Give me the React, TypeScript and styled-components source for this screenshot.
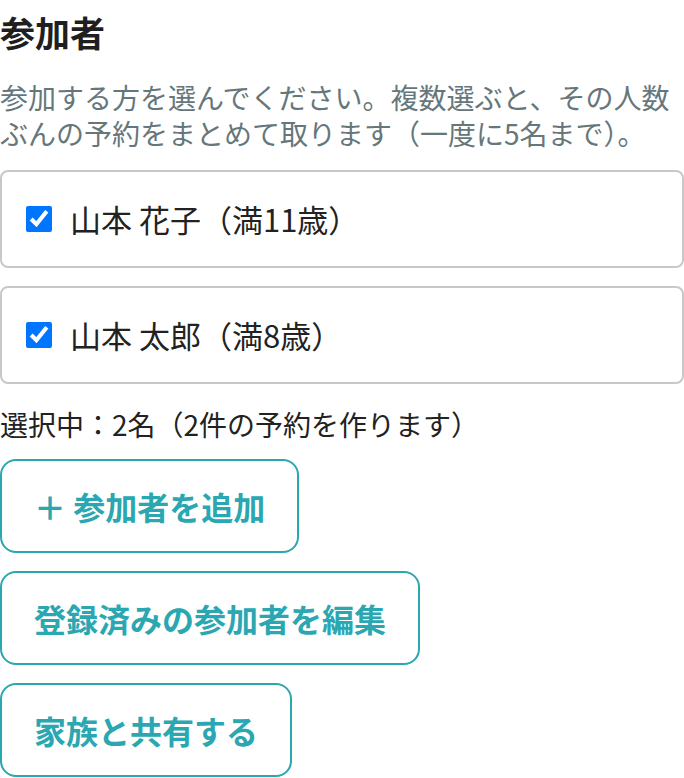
import React from "react";
import styled, { createGlobalStyle } from "styled-components";

const GlobalStyle = createGlobalStyle`
  html, body {
    margin: 0;
    padding: 0;
    background: #ffffff;
  }
  body {
    font-family: "Noto Sans CJK JP", "Noto Sans", sans-serif;
    color: #222222;
  }
`;

const Page = styled.div`
  display: flex;
  flex-direction: column;
  align-items: stretch;
  padding-top: 10px;
  width: 684px;
  box-sizing: border-box;
`;

const Title = styled.h2`
  margin: 0;
  font-size: 35px;
  line-height: 44px;
  font-weight: 700;
  color: #1f1f1f;
`;

const Description = styled.p`
  margin: 25px 0 0;
  font-size: 28px;
  line-height: 36px;
  color: #66777b;
`;

const CardList = styled.div`
  display: flex;
  flex-direction: column;
  gap: 18px;
  margin-top: 19px;
`;

const Card = styled.label`
  display: flex;
  align-items: center;
  gap: 18px;
  height: 98px;
  box-sizing: border-box;
  padding: 0 24px;
  border: 2px solid #c8c8c8;
  border-radius: 8px;
  background: #ffffff;
  cursor: pointer;
`;

const Check = styled.input`
  width: 26px;
  height: 26px;
  margin: 0;
  accent-color: #0075ff;
  flex: none;
`;

const CardText = styled.span`
  font-size: 31px;
  line-height: 40px;
  color: #222222;
`;

const Summary = styled.div`
  margin-top: 22px;
  font-size: 28px;
  line-height: 36px;
  color: #222222;
`;

const ButtonList = styled.div`
  display: flex;
  flex-direction: column;
  align-items: flex-start;
  gap: 18px;
  margin-top: 17px;
`;

const OutlineButton = styled.button`
  display: inline-flex;
  align-items: center;
  height: 94px;
  box-sizing: border-box;
  padding: 0 32px;
  border: 2px solid #2ba7b1;
  border-radius: 16px;
  background: #ffffff;
  color: #2ba7b1;
  font-family: "Noto Sans CJK JP", "Noto Sans", sans-serif;
  font-size: 32px;
  font-weight: 700;
  line-height: 40px;
  cursor: pointer;
`;

const participants = [
  { id: 1, label: "山本 花子（満11歳）" },
  { id: 2, label: "山本 太郎（満8歳）" },
];

export default function App() {
  return (
    <>
      <GlobalStyle />
      <Page>
        <Title>参加者</Title>
        <Description>
          参加する方を選んでください。複数選ぶと、その人数ぶんの予約をまとめて取ります（一度に5名まで）。
        </Description>
        <CardList>
          {participants.map((p) => (
            <Card key={p.id}>
              <Check type="checkbox" defaultChecked />
              <CardText>{p.label}</CardText>
            </Card>
          ))}
        </CardList>
        <Summary>選択中：2名（2件の予約を作ります）</Summary>
        <ButtonList>
          <OutlineButton type="button">＋ 参加者を追加</OutlineButton>
          <OutlineButton type="button">登録済みの参加者を編集</OutlineButton>
          <OutlineButton type="button">家族と共有する</OutlineButton>
        </ButtonList>
      </Page>
    </>
  );
}
